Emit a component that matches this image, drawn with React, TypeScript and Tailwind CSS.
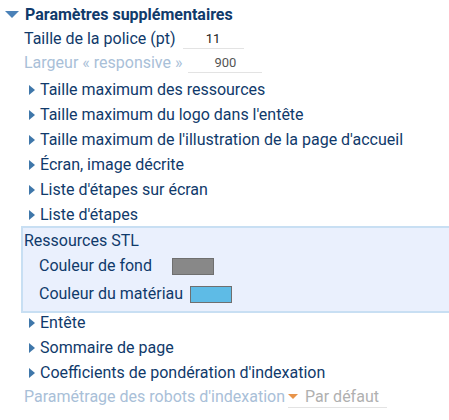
const items1 = [
  "Taille maximum des ressources",
  "Taille maximum du logo dans l'entête",
  "Taille maximum de l'illustration de la page d'accueil",
  "Écran, image décrite",
  "Liste d'étapes sur écran",
  "Liste d'étapes",
];

const items2 = ["Entête", "Sommaire de page", "Coefficients de pondération d'indexation"];

function Closed({ label }: { label: string }) {
  return (
    <div className="flex items-center h-[25px] pl-[29px]">
      <svg width="6" height="10" viewBox="0 0 6 10" className="mr-[5px]">
        <path d="M0 0 L6 5 L0 10 Z" fill="#3f77aa" />
      </svg>
      <span>{label}</span>
    </div>
  );
}

export default function App() {
  return (
    <div className="w-[449px] h-[420px] bg-white text-[16px] text-[#103a6b] font-['Roboto',sans-serif] leading-none pt-[4px]">
      <div className="flex items-center h-[22px] pl-[5px] font-bold">
        <svg width="14" height="8" viewBox="0 0 14 8" className="mr-[6px]">
          <path d="M0 0 L14 0 L7 7 Z" fill="#4b82b8" />
        </svg>
        <span>Paramètres supplémentaires</span>
      </div>
      <div className="flex items-center h-[25px] pl-[24px]">
        <span>Taille de la police (pt)</span>
        <div className="ml-[7px] w-[61px] h-[21px] border-b border-[#e3e3e3] flex items-center justify-center text-[13px] text-[#222]">11</div>
      </div>
      <div className="flex items-center h-[24px] pl-[24px] text-[#a9c0d8]">
        <span>Largeur « responsive »</span>
        <div className="ml-[6px] w-[74px] h-[20px] border-b border-[#e3e3e3] flex items-center justify-center text-[13px] text-[#555]">900</div>
      </div>
      <div className="pt-[2px]">
        {items1.map((t) => (
          <Closed key={t} label={t} />
        ))}
      </div>
      <div className="ml-[21px] -mt-[1px] h-[87px] border-2 border-r-0 border-[#c8dff3] bg-[#eaf0fd] pt-[2px]">
        <div className="h-[22px] flex items-center pl-[1px]">Ressources STL</div>
        <div className="flex items-center h-[28px] pl-[16px]">
          <span>Couleur de fond</span>
          <div className="ml-[20px] w-[42px] h-[17px] bg-[#888888] border border-[#6f6f6f]" />
        </div>
        <div className="flex items-center h-[28px] pl-[16px]">
          <span>Couleur du matériau</span>
          <div className="ml-[7px] w-[42px] h-[17px] bg-[#5ebbe6] border border-[#6f6f6f]" />
        </div>
      </div>
      <div className="-mt-[3px]">
        {items2.map((t) => (
          <Closed key={t} label={t} />
        ))}
      </div>
      <div className="flex items-center h-[24px] pl-[24px] text-[#a9c0d8]">
        <span>Paramétrage des robots d'indexation</span>
        <div className="ml-[3px] w-[99px] h-[22px] border-b border-[#e3e3e3] flex items-center">
          <svg width="10" height="6" viewBox="0 0 10 6" className="mr-[7px]">
            <path d="M0 0 L10 0 L5 5 Z" fill="#e8944a" />
          </svg>
          <span className="text-[#b0b0b0]">Par défaut</span>
        </div>
      </div>
    </div>
  );
}
